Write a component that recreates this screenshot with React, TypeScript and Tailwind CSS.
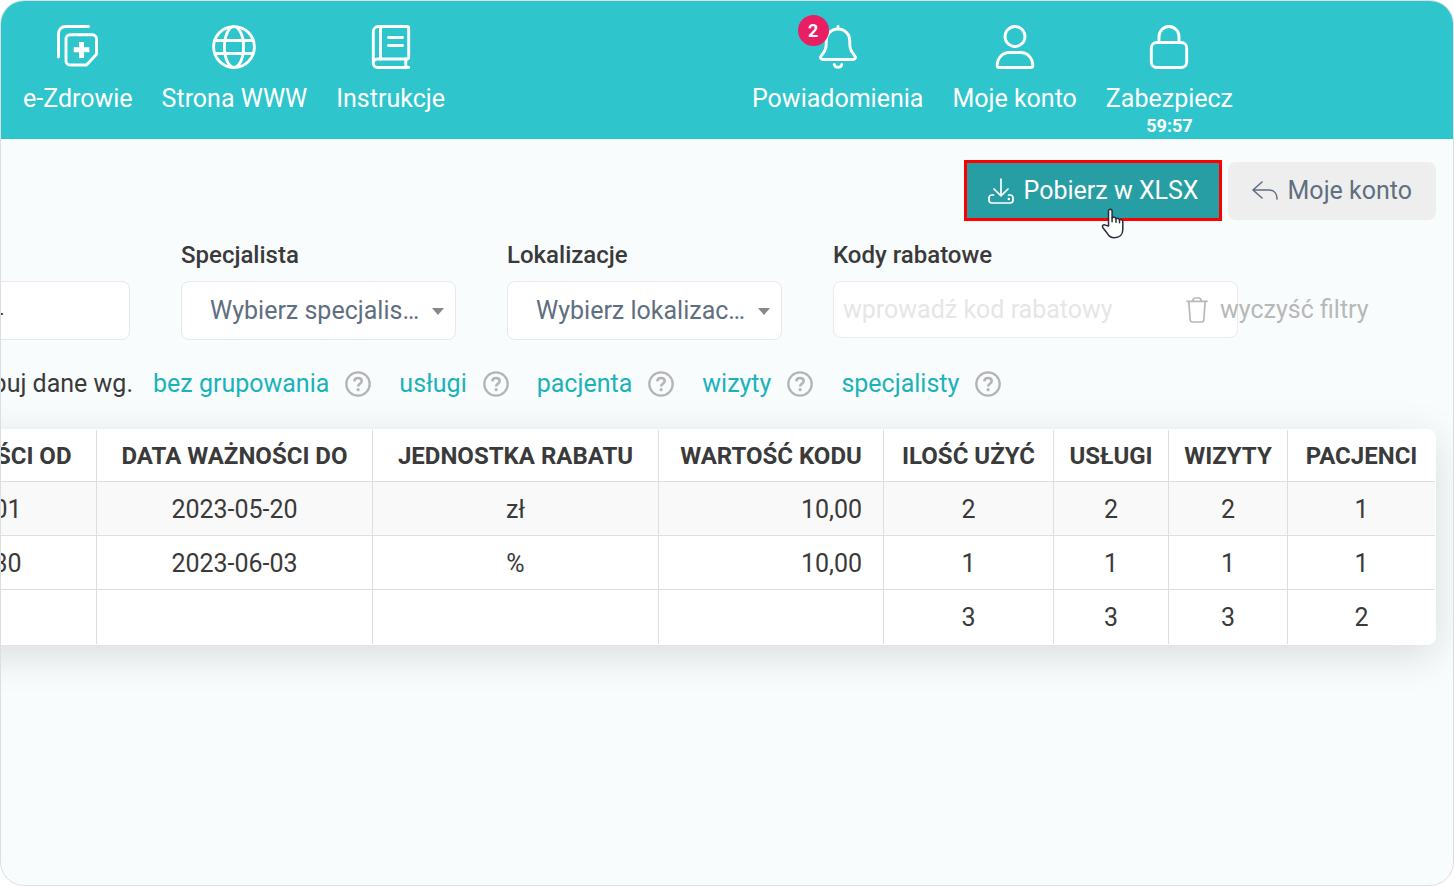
import type { ReactNode } from "react";

function EHealthIcon() {
  return (
    <svg width="44" height="44" viewBox="0 0 44 44" fill="none" stroke="currentColor" strokeWidth="2.9" strokeLinecap="round" strokeLinejoin="round" aria-hidden="true">
      <path d="M2.500 32V8.500a7 7 0 0 1 7-7h23" />
      <path d="M14 9.800h22.500a4 4 0 0 1 4 4v15.500L30.500 40H14a4 4 0 0 1-4-4V13.800a4 4 0 0 1 4-4z" />
      <path d="M23 17h5v5.300h5.300v5h-5.300V33h-5v-5.700h-5.300v-5h5.300z" fill="currentColor" stroke="none" />
    </svg>
  );
}

function GlobeIcon() {
  return (
    <svg width="44" height="44" viewBox="0 0 44 44" fill="none" stroke="currentColor" strokeWidth="2.9" aria-hidden="true">
      <circle cx="22" cy="22" r="20.400" />
      <ellipse cx="22" cy="22" rx="9.600" ry="20.400" />
      <path d="M3 15.500h38M3 28.500h38" />
    </svg>
  );
}

function BookIcon() {
  return (
    <svg width="44" height="44" viewBox="0 0 44 44" fill="none" stroke="currentColor" strokeWidth="2.9" strokeLinecap="round" strokeLinejoin="round" aria-hidden="true">
      <path d="M4.300 38.500V6.500a5 5 0 0 1 5-5H37.700a2 2 0 0 1 2 2V32a2 2 0 0 1-2 2H8.500a4.200 4.200 0 0 0 0 8.500H39.700" />
      <path d="M11.500 1.500V34M36.800 34v8.500" />
      <path d="M19.500 12.500h14M19.500 20.500h14" />
    </svg>
  );
}

function BellIcon() {
  return (
    <svg width="44" height="44" viewBox="0 0 44 44" fill="none" stroke="currentColor" strokeWidth="2.9" strokeLinecap="round" strokeLinejoin="round" aria-hidden="true">
      <path d="M22 1.500v2" />
      <path d="M22 4c-7 0-11.800 5.400-11.800 12v3.500c0 5-1.700 7.500-4.700 11-1.700 2.200-.9 4 1.500 4h30c2.400 0 3.200-1.800 1.500-4-3-3.500-4.700-6-4.700-11V16C33.800 9.400 29 4 22 4z" />
      <path d="M18.200 39.500c.7 1.900 2.100 2.900 3.800 2.900s3.100-1 3.800-2.900" />
    </svg>
  );
}

function UserIcon() {
  return (
    <svg width="44" height="44" viewBox="0 0 44 44" fill="none" stroke="currentColor" strokeWidth="2.9" strokeLinejoin="round" aria-hidden="true">
      <circle cx="22" cy="11.500" r="10" />
      <path d="M4.200 40.500C4.200 33 9.500 27.500 16.500 27.500h11C34.500 27.500 39.800 33 39.800 40.500a2 2 0 0 1-2 2H6.200a2 2 0 0 1-2-2z" />
    </svg>
  );
}

function LockIcon() {
  return (
    <svg width="44" height="44" viewBox="0 0 44 44" fill="none" stroke="currentColor" strokeWidth="2.9" aria-hidden="true">
      <rect x="4.300" y="17.500" width="35.400" height="25" rx="5.500" />
      <path d="M12 17.500v-6a10 10 0 0 1 20 0v6" />
    </svg>
  );
}

function DownloadIcon() {
  return (
    <svg width="26" height="26" viewBox="0 0 26 26" fill="none" stroke="currentColor" strokeWidth="1.700" strokeLinecap="round" strokeLinejoin="round" className="shrink-0" aria-hidden="true">
      <path d="M13 1v16.500M6 11l7 6.800 7-6.800" />
      <path d="M5.500 17H4a3 3 0 0 0-3 3v2a3 3 0 0 0 3 3h18a3 3 0 0 0 3-3v-2a3 3 0 0 0-3-3h-1.500" />
      <circle cx="20.800" cy="21" r="1.200" fill="currentColor" stroke="none" />
    </svg>
  );
}

function BackIcon() {
  return (
    <svg width="26" height="26" viewBox="0 0 26 26" fill="none" stroke="currentColor" strokeWidth="1.600" strokeLinecap="round" strokeLinejoin="round" className="shrink-0" aria-hidden="true">
      <path d="M10 4L1 12l9 8M1.500 12H17c5 0 8 3.500 8 9" />
    </svg>
  );
}

function TrashIcon() {
  return (
    <svg width="22" height="26" viewBox="0 0 22 26" fill="none" stroke="currentColor" strokeWidth="1.700" strokeLinecap="round" strokeLinejoin="round" className="shrink-0" aria-hidden="true">
      <path d="M1 4.300h20M6.500 4C7 2 8 1 9.500 1h3C14 1 15 2 15.500 4" />
      <path d="M2.800 4.500l1.400 18.300A2.300 2.300 0 0 0 6.500 25h9a2.300 2.300 0 0 0 2.300-2.200L19.200 4.500" />
    </svg>
  );
}

function HelpIcon() {
  return (
    <svg width="26" height="26" viewBox="0 0 26 26" fill="none" stroke="currentColor" aria-hidden="true">
      <circle cx="13" cy="13" r="11.700" strokeWidth="2.300" />
      <path d="M9.300 10.300c.2-2.100 1.600-3.300 3.700-3.300 2.200 0 3.700 1.200 3.700 3.100 0 2.700-3.600 2.700-3.600 5.400" strokeWidth="2.600" />
      <circle cx="13.100" cy="18.700" r="1.600" fill="currentColor" stroke="none" />
    </svg>
  );
}

function HandCursor() {
  return (
    <svg width="24" height="32" viewBox="0 0 24 32" fill="#fff" stroke="#2b2b3c" strokeWidth="1.500" strokeLinejoin="round" strokeLinecap="round" className="pointer-events-none absolute top-12 left-[137px] z-10" aria-hidden="true">
      <path d="M7.500 18V3.200C7.500 2 8.300 1.300 9.300 1.300s1.800.7 1.800 1.900v6.600c.6-.7 3.200-.8 3.900.9.900-.7 3-.4 3.500 1 1.600-.5 3.300.2 3.300 2.300v7.500c0 5-3.300 8.300-8.300 8.300-3.500 0-5.500-1.500-7.300-4.500L1.700 19.500c-1-1.900 1-3.600 2.800-2.400z" />
      <path d="M11.100 9.800v4M15 10.700v3.500M18.500 11.700v3" fill="none" />
    </svg>
  );
}

function NavItem({ icon, label, children }: { icon: ReactNode; label: string; children?: ReactNode }) {
  return (
    <a href="#" className="flex flex-col items-center">
      <span className="relative">
        {icon}
        {children}
      </span>
      <span className="mt-3.5 leading-8">{label}</span>
    </a>
  );
}

function SelectField({ id, label, placeholder }: { id: string; label: string; placeholder: string }) {
  return (
    <div className="w-[275px] shrink-0">
      <label htmlFor={id} className="mb-2.5 block text-2xl leading-8 font-medium">{label}</label>
      <div className="relative">
        <select id={id} className="block h-[59px] w-full appearance-none rounded-lg border border-[#e6e9ec] bg-white pr-8 pl-7 text-[#5f6f80]">
          <option>{placeholder}</option>
        </select>
        <span className="pointer-events-none absolute top-[27px] right-3 border-x-[6px] border-t-[7px] border-x-transparent border-t-[#888888]" />
      </div>
    </div>
  );
}

const groupings = ["bez grupowania", "usługi", "pacjenta", "wizyty", "specjalisty"];

const columns = [
  "DATA WAŻNOŚCI OD",
  "DATA WAŻNOŚCI DO",
  "JEDNOSTKA RABATU",
  "WARTOŚĆ KODU",
  "ILOŚĆ UŻYĆ",
  "USŁUGI",
  "WIZYTY",
  "PACJENCI",
];

const rows = [
  ["2023-05-01", "2023-05-20", "zł", "10,00", "2", "2", "2", "1"],
  ["2023-04-30", "2023-06-03", "%", "10,00", "1", "1", "1", "1"],
  ["", "", "", "", "3", "3", "3", "2"],
];

export default function App() {
  return (
    <div className="min-h-screen overflow-hidden bg-white font-[Roboto,sans-serif] text-[25px] text-[#3a3a3a]">
      <div className="min-h-screen overflow-hidden rounded-3xl border border-[#dcdfe0] bg-[#f8fcfd]">
        <header className="flex h-[138px] items-start justify-between bg-[#2fc5cd] pt-6 pr-[220px] pl-[22px] text-white">
          <nav className="flex gap-[29px]">
            <NavItem icon={<EHealthIcon />} label="e-Zdrowie" />
            <NavItem icon={<GlobeIcon />} label="Strona WWW" />
            <NavItem icon={<BookIcon />} label="Instrukcje" />
          </nav>
          <nav className="flex gap-[29px]">
            <NavItem icon={<BellIcon />} label="Powiadomienia">
              <span className="absolute -top-2.5 -left-[18px] flex size-[31px] items-center justify-center rounded-full bg-[#e91e63] text-lg font-bold">2</span>
            </NavItem>
            <NavItem icon={<UserIcon />} label="Moje konto" />
            <div className="flex flex-col items-center">
              <NavItem icon={<LockIcon />} label="Zabezpiecz" />
              <span className="text-lg leading-[22px] font-bold">59:57</span>
            </div>
          </nav>
        </header>

        <main>
          <div className="flex items-center justify-end gap-1.5 pt-[21px] pr-[17px]">
            <div className="relative">
              <button type="button" className="flex h-[61px] items-center gap-2.5 border-3 border-[#ff0000] bg-[#279ea4] pr-5 pl-[21px] whitespace-nowrap text-white">
                <DownloadIcon />
                Pobierz w XLSX
              </button>
              <HandCursor />
            </div>
            <button type="button" className="flex h-[58px] items-center gap-2.5 rounded-lg bg-[#eeeeee] px-6 whitespace-nowrap text-[#5f6f80]">
              <BackIcon />
              Moje konto
            </button>
          </div>

          <div className="-ml-[146px] flex gap-[51px] pt-[18px]">
            <input type="text" aria-label="Data" defaultValue="2023-06-04" className="mt-[42px] block h-[59px] w-[275px] shrink-0 rounded-lg border border-[#e6e9ec] bg-white px-[21px] text-[#3a3a3a]" />
            <SelectField id="specialist" label="Specjalista" placeholder="Wybierz specjalis…" />
            <SelectField id="location" label="Lokalizacje" placeholder="Wybierz lokalizac…" />
            <div>
              <label htmlFor="codes" className="mb-2.5 block text-2xl leading-8 font-medium">Kody rabatowe</label>
              <div className="flex items-center">
                <input id="codes" type="text" placeholder="wprowadź kod rabatowy" className="block h-[57px] w-[405px] shrink-0 rounded-lg border border-[#e9ebee] bg-white px-[9px] placeholder:text-[#e6e6e6]" />
                <button type="button" className="relative -ml-[52px] flex items-center gap-3 whitespace-nowrap text-[#b8b8b8]">
                  <TrashIcon />
                  wyczyść filtry
                </button>
              </div>
            </div>
          </div>

          <div className="flex items-center pt-7">
            <span className="flex w-[132px] shrink-0 justify-end leading-8 whitespace-nowrap">Grupuj dane wg.</span>
            <ul className="flex gap-7 pl-5">
              {groupings.map((name) => (
                <li key={name} className="flex items-center gap-4">
                  <a href="#" className="leading-8 whitespace-nowrap text-[#1bb2ba]">{name}</a>
                  <button type="button" aria-label={`Pomoc: ${name}`} className="text-[#b5b5b5]">
                    <HelpIcon />
                  </button>
                </li>
              ))}
            </ul>
          </div>

          <div className="mt-[29px] mr-[17px] -ml-[181px] rounded-lg border border-white bg-white shadow-[0_10px_40px_rgba(0,0,0,0.13)]">
            <table className="w-full table-fixed border-separate border-spacing-0 text-center whitespace-nowrap">
              <colgroup>
                <col className="w-[276px]" />
                <col className="w-[276px]" />
                <col className="w-[286px]" />
                <col className="w-[225px]" />
                <col className="w-[170px]" />
                <col className="w-[115px]" />
                <col className="w-[119px]" />
                <col />
              </colgroup>
              <thead>
                <tr className="h-[52px]">
                  {columns.map((name) => (
                    <th key={name} scope="col" className="border-r border-b border-[#dedede] p-0 text-2xl font-bold last:border-r-0">{name}</th>
                  ))}
                </tr>
              </thead>
              <tbody>
                {rows.map((row, r) => (
                  <tr key={r} className="group h-[54px]  first:bg-[#f9f9f9]">
                    {row.map((value, c) => (
                      <td key={c} className={`border-r border-b border-[#dedede] pt-0.5 pb-0 group-last:border-b-0 last:border-r-0 ${c === 3 ? "pr-[21px] text-right" : "px-0"}`}>{value}</td>
                    ))}
                  </tr>
                ))}
              </tbody>
            </table>
          </div>
        </main>
      </div>
    </div>
  );
}
